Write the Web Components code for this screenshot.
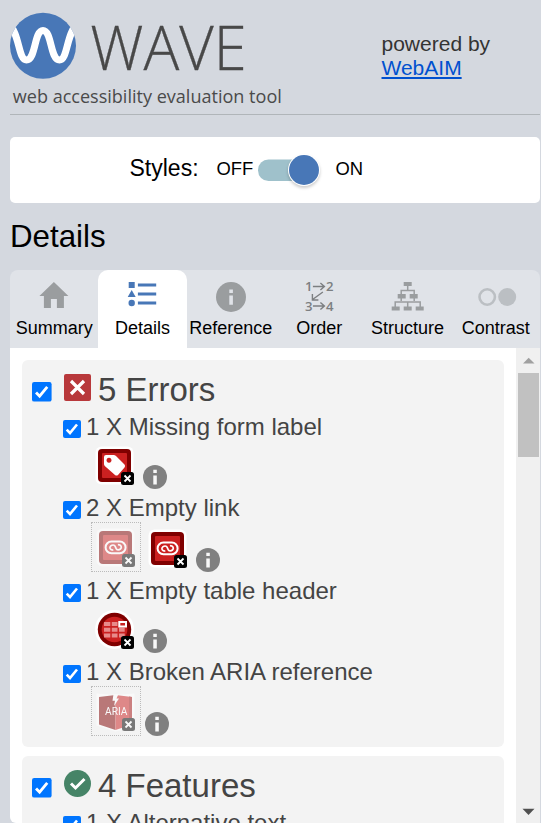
<!DOCTYPE html>
<html lang="en">
<head>
<meta charset="utf-8">
<title>WAVE</title>
<style>
html,body{margin:0;height:100%;overflow:hidden;background:#d4d8df}
body{font-family:"Liberation Sans",Arial,sans-serif;color:#000}
</style>
</head>
<body>
<wave-app></wave-app>
<script>
const define = (name, html) => customElements.define(name, class extends HTMLElement {
  connectedCallback() {
    if (this.shadowRoot) return;
    const t = document.createElement('template');
    t.innerHTML = typeof html === 'function' ? html(this) : html;
    this.attachShadow({mode: 'open'}).append(t.content.cloneNode(true));
  }
});

define('wave-header', `<style>
:host{display:flex;height:114px;border-bottom:1px solid #b0b5b9;box-sizing:content-box}
svg{width:371.5px;height:114px;flex:none}
.by{padding-top:32px;font-size:21px;line-height:24px;color:#333}
a{color:#0050cf;text-decoration:underline;text-decoration-thickness:2px;text-underline-offset:2px}
</style>
<svg viewBox="10 0 371.5 114">
<defs><clipPath id="c"><circle cx="43" cy="45.7" r="33"/></clipPath></defs>
<circle cx="43" cy="45.7" r="33" fill="#4877b7"/>
<path clip-path="url(#c)" d="M8 23C20 33 18 60 26.5 60C36 60 34 30.5 43 30.5C52 30.5 50 60 59.500 60C68 60 66 33 78 23" fill="none" stroke="#fff" stroke-width="7"/>
<text x="90.300" y="69.800" font-family="Open Sans" font-weight="300" font-size="60.500" fill="#484848" stroke="#484848" stroke-width=".3" textLength="156.300" lengthAdjust="spacingAndGlyphs">WAVE</text>
<text x="12.800" y="103" font-family="Open Sans" font-size="18.500" fill="#4a4a4a" textLength="269" lengthAdjust="spacingAndGlyphs">web accessibility evaluation tool</text>
</svg><div class="by">powered by<br><a href="#">WebAIM</a></div>`);

define('style-switch', `<style>
:host{display:flex;align-items:center;height:66px;background:#fff;border-radius:5px;padding-left:119.500px;box-sizing:border-box;font-size:18.4px}
.l{font-size:23px;width:87px;padding-bottom:3px}
.off{width:40.500px;padding-bottom:2px}
.on{padding:0 0 2px .500px}
svg{width:78px;height:44px;flex:none;overflow:visible}
</style><span class="l">Styles:</span><span class="off">OFF</span>
<svg viewBox="257 148 78 44"><rect x="258" y="159.500" width="58" height="21.500" rx="10.500" fill="#9fc1cb"/><circle cx="304" cy="170" r="16" fill="#fff" style="filter:drop-shadow(0 2px 1.500px #0003)"/><circle cx="304" cy="170" r="15" fill="#4877b7"/></svg><span class="on">ON</span>`);

const tabIcons = {
home:`<path d="M14 2L28.500 16H24V28H17V19H11V28H4V16H-.500Z" transform="translate(.900 -1)" fill="#9a9d9f"/>`,
list:`<g transform="translate(.700 0)" fill="#4877b7"><path d="M1 1h6v6H1zM4 9l4 7H0z"/><circle cx="4" cy="22" r="3.200"/><path d="M10.200 2.600h18.300v3H10.200zM10.200 11.600h18.300v3H10.200zM10.200 20.600h18.300v3H10.200z"/></g>`,
info:`<circle cx="15" cy="16" r="15" fill="#9a9d9f"/><path d="M13.300 8.500h3.600v3.500h-3.600zM13.300 14.500h3.600v9.300h-3.600z" fill="#e0e3e8"/>`,
order:`<g transform="translate(.900 0)"><g font-family="Open Sans" font-size="13.200" font-weight="600" fill="#7c7f81"><text x="0" y="9.800">1</text><text x="21" y="9.800">2</text><text x="0" y="29.500">3</text><text x="21" y="29.500">4</text></g><path d="M8 5.500H19.500M15.500 2l4 3.500-4 3.500M8 25H19.500M15.500 21.500l4 3.500-4 3.500M18 11L7 19M7.500 13V19H13.500" fill="none" stroke="#7c7f81" stroke-width="1.400"/></g>`,
tree:`<g transform="translate(.700 0)"><path d="M15 4V9M8.500 13V9.500H21.500V13M8.500 15V20M21.500 15V20M2.500 27V21H27.500V27M15 27V21" fill="none" stroke="#9a9d9f" stroke-width="1.500"/><path d="M11 1h8v4h-8zM5 13h8v4.500H5zM17 13h8v4.500h-8zM-1 25.500h8v4h-8zM11 25.500h8v4h-8zM23 25.500h8v4h-8z" fill="#9a9d9f"/></g>`,
contrast:`<circle cx="6.200" cy="16" r="7.700" fill="none" stroke="#bbbfc3" stroke-width="2.600"/><circle cx="26.200" cy="16" r="9" fill="#bbbfc3"/>`};

define('wave-tab', el => `<style>
:host{display:flex;flex-direction:column;align-items:center;flex:1 1 0;min-width:0;padding-top:11px;box-sizing:border-box;font-size:18px}
:host([active]){background:#fff;border-radius:10px 10px 0 0}
svg{width:30px;height:32px;overflow:visible;flex:none}
span{line-height:20px;margin-top:5px;white-space:nowrap}
</style><svg viewBox="0 0 30 32">${tabIcons[el.getAttribute('icon')]}</svg><span><slot></slot></span>`);

define('wave-tabs', `<style>:host{display:flex;width:530px;height:78px;background:#e0e3e8;border-radius:8px 8px 0 0}</style><slot></slot>`);

define('check-box', `<style>:host{display:block;width:var(--s,18px);height:var(--s,18px);flex:none}svg{display:block;width:100%;height:100%}</style>
<svg viewBox="0 0 18 18"><rect width="18" height="18" rx="2" fill="#0075ff"/><path d="M3.700 9.600L7 13L14 4.500" fill="none" stroke="#fff" stroke-width="2.600"/></svg>`);

define('info-dot', `<style>:host{display:block;width:24px;height:24px;flex:none;margin-left:8px}:host([near]){margin-left:4px}svg{display:block}</style>
<svg width="24" height="24"><circle cx="12" cy="12" r="12" fill="#808080"/><path d="M10.300 4.700h3.500v3.400h-3.500zM10.300 10.500h3.500v9h-3.500z" fill="#f8f8f8"/></svg>`);

// Glyphs share a 40 x 40 canvas: 3px halo, 33px body, badge in the lower right corner.
const badge = `<rect x="26" y="26" width="13" height="13" rx="2.500" fill="#000"/><path d="M29.500 29.500l6 6M35.500 29.500l-6 6" stroke="#fff" stroke-width="1.800"/>`;
const square = `<rect x=".500" y=".500" width="38" height="38" rx="6" fill="#fff"/><rect x="3" y="3" width="33" height="33" rx="4" fill="#800000"/><rect x="7" y="7" width="25" height="25" rx="1" fill="#cb2020"/>`;
const glyphs = {
label: square + `<path fill-rule="evenodd" d="M11 9h7.500q1.500 0 2.500 1L29.500 18.500q1.200 1.500 0 3L23 29q-1.500 1.200-3 0L9.800 20q-.800-1-.800-2V11q0-2 2-2zM14 11.800a2.500 2.500 0 1 0 .01 0z" fill="#fff"/>`,
link: square + `<g fill="none" stroke="#fff"><rect x="9.600" y="13.600" width="20" height="11.600" rx="5.800" stroke-width="2"/><path d="M17.300 22.200C14 22.200 13 19.300 14.800 17.800C16 16.800 18.500 16.600 19 18C19.300 19 19.900 19.800 20.200 20.700C20.700 22.200 23.200 22 24.400 21C26.200 19.500 25.200 16.600 21.900 16.600" stroke-width="1.700"/></g>`,
table: `<circle cx="19.500" cy="19.500" r="19.500" fill="#fff"/><circle cx="19.500" cy="19.500" r="16.700" fill="#800000"/><circle cx="19.500" cy="19.500" r="12.800" fill="#cb2020"/><path d="M9 12h6.300v4H9zM16.800 12h5.700v4h-5.700zM9 17.800h6.300v4H9zM16.800 17.800h5.700v4h-5.700zM24 17.800h5.700v4H24zM9 23.500h6.300v4H9zM16.800 23.500h5.700v4h-5.700zM24 23.500h5.700v4H24z" fill="#e88a8a"/><rect x="24.300" y="12" width="6.700" height="4.500" fill="none" stroke="#fff" stroke-width="2"/>`,
aria: `<path d="M.500 1.500L19.500 3 38.500 1.500V35L19.500 39.500.500 33.500Z" fill="#fff"/><path d="M3 5L19.500 3V38L3 32.500Z" fill="#800000"/><path d="M19.500 3L36 5V32.500L19.500 38Z" fill="#cb2020"/><path d="M33 4.500L36 5V32.500L33 33.500Z" fill="#a51010"/><path d="M17.500 2H22.500L20.500 6.500H23L18 14L19 8.800H16.500Z" fill="#fff"/><text x="9" y="23" font-family="Roboto" font-size="11" fill="#fff" textLength="22.500" lengthAdjust="spacingAndGlyphs">ARIA</text>`};

define('error-icon', el => `<style>
:host{display:block;flex:none;width:40px;height:40px;margin:0 0 3px 4px}
:host([after]){margin-left:7px}
:host([hidden-item]){width:50px;height:50px;margin:0;border:1px dotted #bbb;box-sizing:border-box;padding:5px 0 0 4px}
svg{display:block;overflow:visible}
:host([hidden-item]) svg{opacity:.5}
</style><svg width="40" height="40">${glyphs[el.getAttribute('glyph')]}${badge}</svg>`);

define('issue-item', el => `<style>
:host{display:flex;flex-direction:column;height:81px;box-sizing:border-box;padding-bottom:5px}
:host([tall]){height:83px}
.t{display:flex;gap:5px;height:28px;line-height:28px;font-size:24px;color:#444;white-space:nowrap}
check-box{margin-top:7px}
.i{display:flex;align-items:flex-end;flex:1;padding-left:28px}
</style><div class="t"><check-box></check-box><span>${el.getAttribute('label')}</span></div><div class="i"><slot></slot></div>`);

define('issue-group', el => `<style>
:host{display:block;background:#f3f3f3;border-radius:6px;padding-bottom:6px;margin-bottom:9px;flex:none}
.h{display:flex;height:53px;padding-left:10px;color:#444;font-size:33px;line-height:38px;box-sizing:border-box}
check-box{--s:19.600px;margin:22px 12.400px 0 0}
svg{width:27px;height:27px;margin:14px 7px 0 0}
.h span{margin-top:11px}
.b{padding-left:41px}
</style><div class="h"><check-box></check-box>${el.getAttribute('kind') === 'error'
? `<svg viewBox="0 0 27 27"><rect width="27" height="27" rx="2" fill="#b8383b"/><path d="M7 7l13 13M20 7L7 20" stroke="#fff" stroke-width="3.200"/></svg>`
: `<svg viewBox="0 0 27 27"><circle cx="13.500" cy="13.500" r="13.500" fill="#468467"/><path d="M7 13.500L11.500 18L20.500 9" fill="none" stroke="#fff" stroke-width="3"/></svg>`}<span>${el.getAttribute('label')}</span></div><div class="b"><slot></slot></div>`);

define('scroll-bar', `<style>
:host{display:flex;flex-direction:column;justify-content:space-between;width:24px;background:#f0f0f0;flex:none}
.thumb{width:21px;height:84px;background:#c1c1c1;margin-left:2px}
svg{display:block}
</style><div><svg width="24" height="25"><path d="M7 15.500H18.500L12.700 9.700Z" fill="#a0a0a0"/></svg><div class="thumb"></div></div><svg width="24" height="20"><path d="M6.500 5.700H18.500L12.500 12Z" fill="#505050"/></svg>`);

define('issue-panel', `<style>
:host{display:flex;width:530px;height:475px;background:#fff;overflow:hidden;border-radius:0 0 0 6px}
.c{flex:1;min-width:0;padding:12px 12px 0;display:flex;flex-direction:column;overflow:hidden}
</style><div class="c"><slot></slot></div><scroll-bar></scroll-bar>`);

define('wave-app', `<style>
:host{display:flex;flex-direction:column;width:530px;height:823px;padding-left:10px;overflow:hidden}
style-switch{margin-top:22px}
h1{font-size:31.300px;font-weight:400;line-height:40px;margin:14px 0 13px}
</style>
<wave-header></wave-header><style-switch></style-switch><h1>Details</h1>
<wave-tabs><wave-tab icon="home">Summary</wave-tab><wave-tab icon="list" active>Details</wave-tab><wave-tab icon="info">Reference</wave-tab><wave-tab icon="order">Order</wave-tab><wave-tab icon="tree">Structure</wave-tab><wave-tab icon="contrast">Contrast</wave-tab></wave-tabs>
<issue-panel>
<issue-group kind="error" label="5 Errors">
<issue-item label="1 X Missing form label"><error-icon glyph="label"></error-icon><info-dot></info-dot></issue-item>
<issue-item tall label="2 X Empty link"><error-icon glyph="link" hidden-item></error-icon><error-icon glyph="link" after></error-icon><info-dot></info-dot></issue-item>
<issue-item label="1 X Empty table header"><error-icon glyph="table"></error-icon><info-dot></info-dot></issue-item>
<issue-item tall label="1 X Broken ARIA reference"><error-icon glyph="aria" hidden-item></error-icon><info-dot near></info-dot></issue-item>
</issue-group>
<issue-group kind="feature" label="4 Features"><issue-item label="1 X Alternative text"></issue-item></issue-group>
</issue-panel>`);
</script>
</body>
</html>
